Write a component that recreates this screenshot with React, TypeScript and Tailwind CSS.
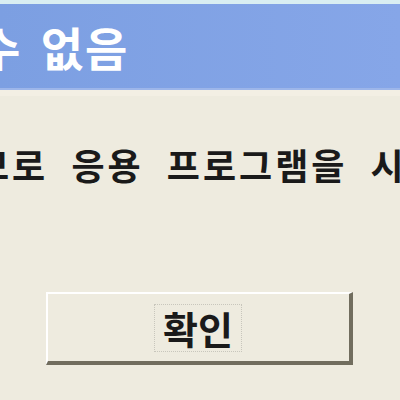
export default function App() {
  const ko = { fontFamily: '"Noto Sans CJK KR", "Noto Sans", sans-serif' }
  return (
    <div className="w-[400px] h-[400px] overflow-hidden bg-[#eeebdf] flex flex-col" style={ko}>
      <div className="h-[4px] bg-[#d9eef2]" />
      <div className="h-[86px] bg-gradient-to-r from-[#7c9fe2] to-[#86a6e8] flex items-center overflow-hidden border-b-2 border-[#9db6ea]">
        <span className="ml-[-22px] text-[46px] leading-none font-semibold text-white whitespace-nowrap tracking-[2px] [word-spacing:6px]">
          수 없음
        </span>
      </div>
      <div className="h-[6px] bg-[#f3efe4]" />
      <div className="flex-1 flex flex-col">
        <div className="mt-[48px] h-[40px] flex items-center overflow-hidden">
          <span className="ml-[-24px] text-[36px] leading-none font-bold text-[#1a1a1a] whitespace-nowrap tracking-[3px] [word-spacing:12px]">
            므로 응용 프로그램을 시
          </span>
        </div>
        <div className="mt-[108px] flex justify-center">
          <button className="ml-[-2px] w-[307px] h-[73px] bg-[#eeebdf] border-t-2 border-l-2 border-t-white border-l-white border-r-4 border-b-4 border-r-[#716d5e] border-b-[#716d5e] flex items-center justify-center">
            <span className="text-[38px] leading-none font-bold text-[#1a1a1a] border border-dotted border-[#c8c6bc] px-2 py-1">
              확인
            </span>
          </button>
        </div>
      </div>
    </div>
  )
}
